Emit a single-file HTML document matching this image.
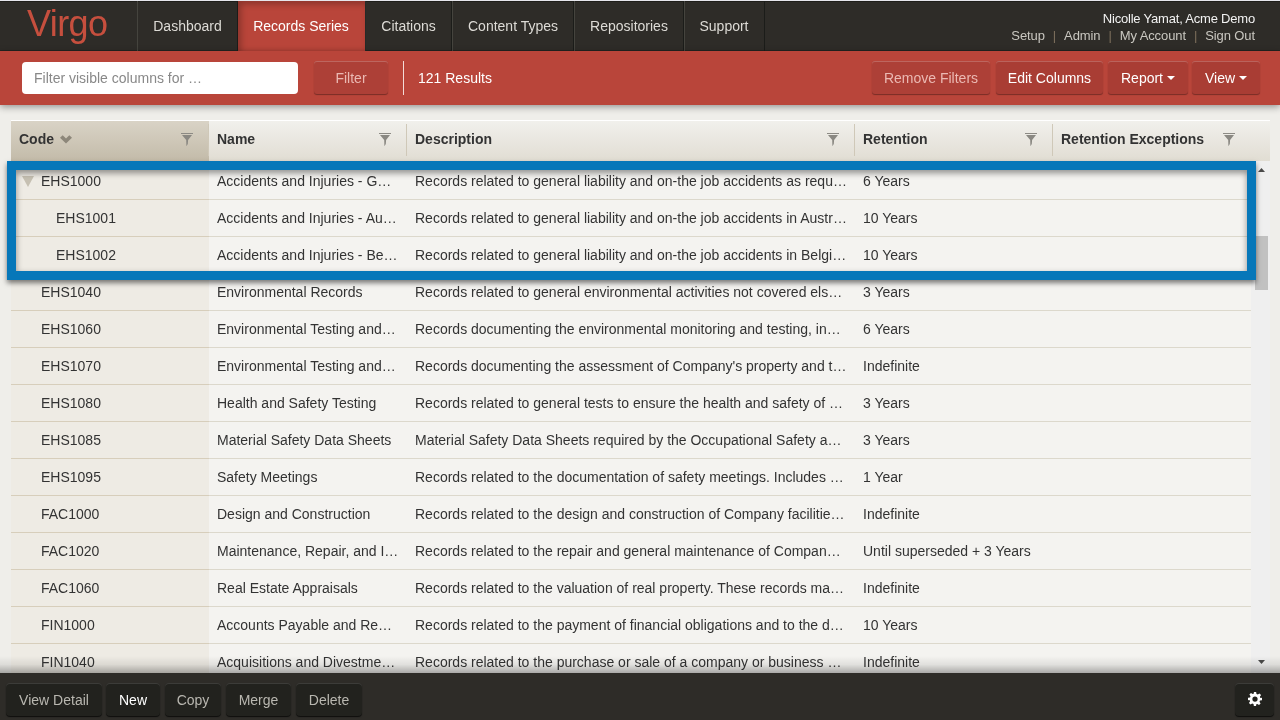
<!DOCTYPE html>
<html><head><meta charset="utf-8">
<style>
*{box-sizing:border-box;margin:0;padding:0}
html,body{width:1280px;height:720px;overflow:hidden;background:#efeeea;font-family:"Liberation Sans",sans-serif;position:relative}
body{will-change:transform}
.abs{position:absolute}
#topline{left:0;top:0;width:1280px;height:1px;background:#e6e6ec}
#nav{left:0;top:1px;width:1280px;height:50px;background:#2e2c28}
.logo{left:27px;top:2px;font-size:36px;color:#c64f3e;letter-spacing:-0.6px}
.sep{top:0;width:1px;height:50px;background:#45443e}
.sepd{position:absolute;top:0;width:1px;height:50px;background:#1b1c19}
#navtop{left:0;top:0;width:1280px;height:1px;background:#1f1e1a}
#navbot{left:0;top:49px;width:1280px;height:1px;background:#222421}
.nv{top:0;height:50px;line-height:50px;font-size:14px;color:#dddbd6;text-align:center;text-indent:-1px}
.nv.act{background:#b9453a;color:#fff;box-shadow:inset 3px 3px 6px rgba(0,0,0,.25)}
.user{right:25px;top:9px;font-size:13px;color:#f2f2f2;text-align:right;line-height:17px;letter-spacing:-0.2px}
.links{right:25px;top:26px;letter-spacing:-0.1px;font-size:13px;color:#c9c7c0;line-height:17px;white-space:nowrap}
.links .p{color:#7c6f5c;margin:0 8px}
#bar{left:0;top:51px;width:1280px;height:54px;background:#b9453a;box-shadow:0 2px 7px rgba(0,0,0,.38)}
.inp{left:22px;top:11px;width:276px;height:32px;background:#fff;border-radius:4px;font-size:14px;color:#888;padding-left:12px;line-height:32px}
.btn{top:10px;height:33px;background:#a93d34;border-radius:3px;font-size:14px;color:#fff;text-align:center;line-height:35px;box-shadow:inset 0 1px 0 rgba(255,255,255,.2),0 1px 1px rgba(0,0,0,.35)}
.btn.dis{color:#ebb9b3;background:#ad4037}
.vsep{left:403px;top:10px;width:1px;height:34px;background:#f4dcd8}
.res{left:418px;top:0;line-height:54px;font-size:14px;color:#fff}
.caret{display:inline-block;width:0;height:0;border-left:4px solid transparent;border-right:4px solid transparent;border-top:4px solid #fff;vertical-align:middle;margin-left:4px;margin-top:-2px}

#hdr{left:11px;top:120px;width:1259px;height:41px;border-top:1px solid #fff;background:linear-gradient(#f1f0ec,#e1ddd3)}
.hc{position:absolute;top:0;height:40px;line-height:37px;font-size:14px;font-weight:bold;color:#333;padding-left:8px}
.hc.sort{background:linear-gradient(#d9d3c6,#c3bba9)}
.hs{position:absolute;top:3px;width:1px;height:32px;background:#cfc8b8}
.fun{position:absolute;top:12px;width:12px;height:13px}
.chev{position:absolute;left:49px;top:14px}
#body{left:11px;top:163px;width:1240px;height:510px;overflow:hidden}
.row{position:absolute;left:0;width:1240px;height:37px;border-bottom:1px solid #dcd8cc}
.row::before{content:"";position:absolute;left:0;top:36px;width:198px;height:1px;background:#d7cebb}
.cc{position:absolute;top:0;height:36px;line-height:36px;font-size:14px;color:#333;white-space:nowrap;overflow:hidden;padding-left:8px;background:#f4f3f0}
.c0{left:0;width:198px;background:#eeebe4}
.c1{left:198px;width:198px}
.c2{left:396px;width:448px}
.c3{left:844px;width:198px}
.c4{left:1042px;width:198px}
.tri{position:absolute;left:11px;top:13px;width:0;height:0;border-left:6.5px solid transparent;border-right:6.5px solid transparent;border-top:11px solid #c6c0b2}
#sb{left:1251px;top:161px;width:19px;height:512px;background:#efefef}
#thumb{left:1255px;top:236px;width:13px;height:54px;background:#c1c1c1}
.sarr{position:absolute;width:0;height:0;border-left:4px solid transparent;border-right:4px solid transparent}
#shadowb{left:0;top:656px;width:1280px;height:17px;background:linear-gradient(rgba(0,0,0,0),rgba(0,0,0,.08) 50%,rgba(0,0,0,.3))}
#blue{left:7px;top:161px;width:1249px;height:119px;border:9px solid #0677b9;box-shadow:0 3px 5px rgba(0,0,0,.5),inset 0 3px 6px rgba(0,0,0,.42)}
#bot{left:0;top:673px;width:1280px;height:47px;background:#2e2c28}
.bb{position:absolute;top:10px;height:33px;line-height:34px;background:#22221e;border-radius:4px;font-size:14px;color:#b9b7b0;text-align:center;box-shadow:inset 0 1px 0 rgba(255,255,255,.12),0 1px 1px rgba(0,0,0,.7)}
</style></head>
<body>
<div id="topline" class="abs"></div>
<div id="nav" class="abs">
  <div id="navtop" class="abs"></div><div id="navbot" class="abs"></div>
  <div class="abs logo">Virgo</div>
  <div class="abs sep" style="left:137px"></div>
  <div class="abs nv" style="left:138px;width:100px">Dashboard</div>
  <div class="abs nv act" style="left:238px;width:127px">Records Series</div>
  <div class="abs nv" style="left:366px;width:86px">Citations</div>
  <div class="sepd" style="left:451px"></div><div class="abs sep" style="left:452px"></div>
  <div class="abs nv" style="left:453px;width:121px">Content Types</div>
  <div class="sepd" style="left:573px"></div><div class="abs sep" style="left:574px"></div>
  <div class="abs nv" style="left:575px;width:109px">Repositories</div>
  <div class="sepd" style="left:683px"></div><div class="abs sep" style="left:684px"></div>
  <div class="abs nv" style="left:685px;width:79px">Support</div>
  <div class="sepd" style="left:764px"></div><div class="sepd" style="left:237px"></div><div class="sepd" style="left:365px;background:#262927"></div>
  <div class="abs user">Nicolle Yamat, Acme Demo</div>
  <div class="abs links">Setup<span class="p">|</span>Admin<span class="p">|</span>My Account<span class="p">|</span>Sign Out</div>
</div>
<div id="bar" class="abs">
  <div class="abs inp">Filter visible columns for …</div>
  <div class="abs btn dis" style="left:314px;width:74px">Filter</div>
  <div class="abs vsep"></div>
  <div class="abs res">121 Results</div>
  <div class="abs btn dis" style="left:872px;width:118px">Remove Filters</div>
  <div class="abs btn" style="left:996px;width:107px">Edit Columns</div>
  <div class="abs btn" style="left:1108px;width:80px">Report<span class="caret"></span></div>
  <div class="abs btn" style="left:1192px;width:68px">View<span class="caret"></span></div>
</div>
<div id="hdr" class="abs">
<div class="hc sort" style="left:0;width:198px">Code</div>
<svg class="chev" width="12" height="9" viewBox="0 0 12 9"><path d="M0 2.8 L2.7 0.2 L6 3.5 L9.3 0.2 L12 2.8 L6 8.6 Z" fill="#8d877a"/></svg>
<div class="hs" style="left:197px"></div>
<svg class="fun" style="left:170px" viewBox="0 0 12 13"><rect x="0" y="0" width="12" height="1" fill="#8c8a84"/><path d="M1 2 L11 2 L7.1 7 L6.8 11 L5.4 13.2 L5.2 7 Z" fill="#8a8882"/></svg>
<div class="hc" style="left:198px;width:198px">Name</div>
<div class="hs" style="left:395px"></div>
<svg class="fun" style="left:368px" viewBox="0 0 12 13"><rect x="0" y="0" width="12" height="1" fill="#8c8a84"/><path d="M1 2 L11 2 L7.1 7 L6.8 11 L5.4 13.2 L5.2 7 Z" fill="#8a8882"/></svg>
<div class="hc" style="left:396px;width:448px">Description</div>
<div class="hs" style="left:843px"></div>
<svg class="fun" style="left:816px" viewBox="0 0 12 13"><rect x="0" y="0" width="12" height="1" fill="#8c8a84"/><path d="M1 2 L11 2 L7.1 7 L6.8 11 L5.4 13.2 L5.2 7 Z" fill="#8a8882"/></svg>
<div class="hc" style="left:844px;width:198px">Retention</div>
<div class="hs" style="left:1041px"></div>
<svg class="fun" style="left:1014px" viewBox="0 0 12 13"><rect x="0" y="0" width="12" height="1" fill="#8c8a84"/><path d="M1 2 L11 2 L7.1 7 L6.8 11 L5.4 13.2 L5.2 7 Z" fill="#8a8882"/></svg>
<div class="hc" style="left:1042px;width:198px">Retention Exceptions</div>
<svg class="fun" style="left:1212px" viewBox="0 0 12 13"><rect x="0" y="0" width="12" height="1" fill="#8c8a84"/><path d="M1 2 L11 2 L7.1 7 L6.8 11 L5.4 13.2 L5.2 7 Z" fill="#8a8882"/></svg>
</div>
<div id="body" class="abs">
<div class="row" style="top:0px">
<div class="cc c0" style="padding-left:30px"><span class="tri"></span>EHS1000</div>
<div class="cc c1">Accidents and Injuries - G…</div><div class="cc c2">Records related to general liability and on-the job accidents as requ…</div><div class="cc c3">6 Years</div><div class="cc c4"></div></div>
<div class="row" style="top:37px">
<div class="cc c0" style="padding-left:45px">EHS1001</div>
<div class="cc c1">Accidents and Injuries - Au…</div><div class="cc c2">Records related to general liability and on-the job accidents in Austr…</div><div class="cc c3">10 Years</div><div class="cc c4"></div></div>
<div class="row" style="top:74px">
<div class="cc c0" style="padding-left:45px">EHS1002</div>
<div class="cc c1">Accidents and Injuries - Be…</div><div class="cc c2">Records related to general liability and on-the job accidents in Belgi…</div><div class="cc c3">10 Years</div><div class="cc c4"></div></div>
<div class="row" style="top:111px">
<div class="cc c0" style="padding-left:30px">EHS1040</div>
<div class="cc c1">Environmental Records</div><div class="cc c2">Records related to general environmental activities not covered els…</div><div class="cc c3">3 Years</div><div class="cc c4"></div></div>
<div class="row" style="top:148px">
<div class="cc c0" style="padding-left:30px">EHS1060</div>
<div class="cc c1">Environmental Testing and…</div><div class="cc c2">Records documenting the environmental monitoring and testing, in…</div><div class="cc c3">6 Years</div><div class="cc c4"></div></div>
<div class="row" style="top:185px">
<div class="cc c0" style="padding-left:30px">EHS1070</div>
<div class="cc c1">Environmental Testing and…</div><div class="cc c2">Records documenting the assessment of Company's property and t…</div><div class="cc c3">Indefinite</div><div class="cc c4"></div></div>
<div class="row" style="top:222px">
<div class="cc c0" style="padding-left:30px">EHS1080</div>
<div class="cc c1">Health and Safety Testing</div><div class="cc c2">Records related to general tests to ensure the health and safety of …</div><div class="cc c3">3 Years</div><div class="cc c4"></div></div>
<div class="row" style="top:259px">
<div class="cc c0" style="padding-left:30px">EHS1085</div>
<div class="cc c1">Material Safety Data Sheets</div><div class="cc c2">Material Safety Data Sheets required by the Occupational Safety a…</div><div class="cc c3">3 Years</div><div class="cc c4"></div></div>
<div class="row" style="top:296px">
<div class="cc c0" style="padding-left:30px">EHS1095</div>
<div class="cc c1">Safety Meetings</div><div class="cc c2">Records related to the documentation of safety meetings. Includes …</div><div class="cc c3">1 Year</div><div class="cc c4"></div></div>
<div class="row" style="top:333px">
<div class="cc c0" style="padding-left:30px">FAC1000</div>
<div class="cc c1">Design and Construction</div><div class="cc c2">Records related to the design and construction of Company facilitie…</div><div class="cc c3">Indefinite</div><div class="cc c4"></div></div>
<div class="row" style="top:370px">
<div class="cc c0" style="padding-left:30px">FAC1020</div>
<div class="cc c1">Maintenance, Repair, and I…</div><div class="cc c2">Records related to the repair and general maintenance of Compan…</div><div class="cc c3">Until superseded + 3 Years</div><div class="cc c4"></div></div>
<div class="row" style="top:407px">
<div class="cc c0" style="padding-left:30px">FAC1060</div>
<div class="cc c1">Real Estate Appraisals</div><div class="cc c2">Records related to the valuation of real property. These records ma…</div><div class="cc c3">Indefinite</div><div class="cc c4"></div></div>
<div class="row" style="top:444px">
<div class="cc c0" style="padding-left:30px">FIN1000</div>
<div class="cc c1">Accounts Payable and Re…</div><div class="cc c2">Records related to the payment of financial obligations and to the d…</div><div class="cc c3">10 Years</div><div class="cc c4"></div></div>
<div class="row" style="top:481px">
<div class="cc c0" style="padding-left:30px">FIN1040</div>
<div class="cc c1">Acquisitions and Divestme…</div><div class="cc c2">Records related to the purchase or sale of a company or business …</div><div class="cc c3">Indefinite</div><div class="cc c4"></div></div>
</div>
<div id="sb" class="abs"><svg style="position:absolute;left:7px;top:7px" width="7" height="4"><path d="M0 4L7 4L3.5 0Z" fill="#4a4a4a"/></svg><svg style="position:absolute;left:7px;top:499px" width="7" height="4"><path d="M0 0L7 0L3.5 4Z" fill="#4a4a4a"/></svg></div>
<div id="thumb" class="abs"></div>
<div id="blue" class="abs"></div>
<div id="shadowb" class="abs"></div>
<div id="bot" class="abs">
<div class="bb" style="left:6px;width:96px">View Detail</div>
<div class="bb" style="left:106px;width:54px;color:#fff">New</div>
<div class="bb" style="left:165px;width:56px">Copy</div>
<div class="bb" style="left:226px;width:65px">Merge</div>
<div class="bb" style="left:296px;width:66px">Delete</div>
<div class="bb" style="left:1235px;width:39px"><svg width="14" height="14" viewBox="0 0 16 16" style="position:absolute;left:13px;top:9px"><path fill="#fff" fill-rule="evenodd" d="M6.7 0h2.6l.4 2.3a6 6 0 0 1 1.5.6l1.9-1.3 1.8 1.8-1.3 1.9a6 6 0 0 1 .6 1.5L16 6.7v2.6l-2.3.4a6 6 0 0 1-.6 1.5l1.3 1.9-1.8 1.8-1.9-1.3a6 6 0 0 1-1.5.6L9.3 16H6.7l-.4-2.3a6 6 0 0 1-1.5-.6l-1.9 1.3-1.8-1.8 1.3-1.9a6 6 0 0 1-.6-1.5L0 9.3V6.7l2.3-.4a6 6 0 0 1 .6-1.5L1.6 2.9l1.8-1.8 1.9 1.3a6 6 0 0 1 1.5-.6zM8 5A3 3 0 1 0 8 11 3 3 0 1 0 8 5z"/></svg></div>
</div>
</body></html>
